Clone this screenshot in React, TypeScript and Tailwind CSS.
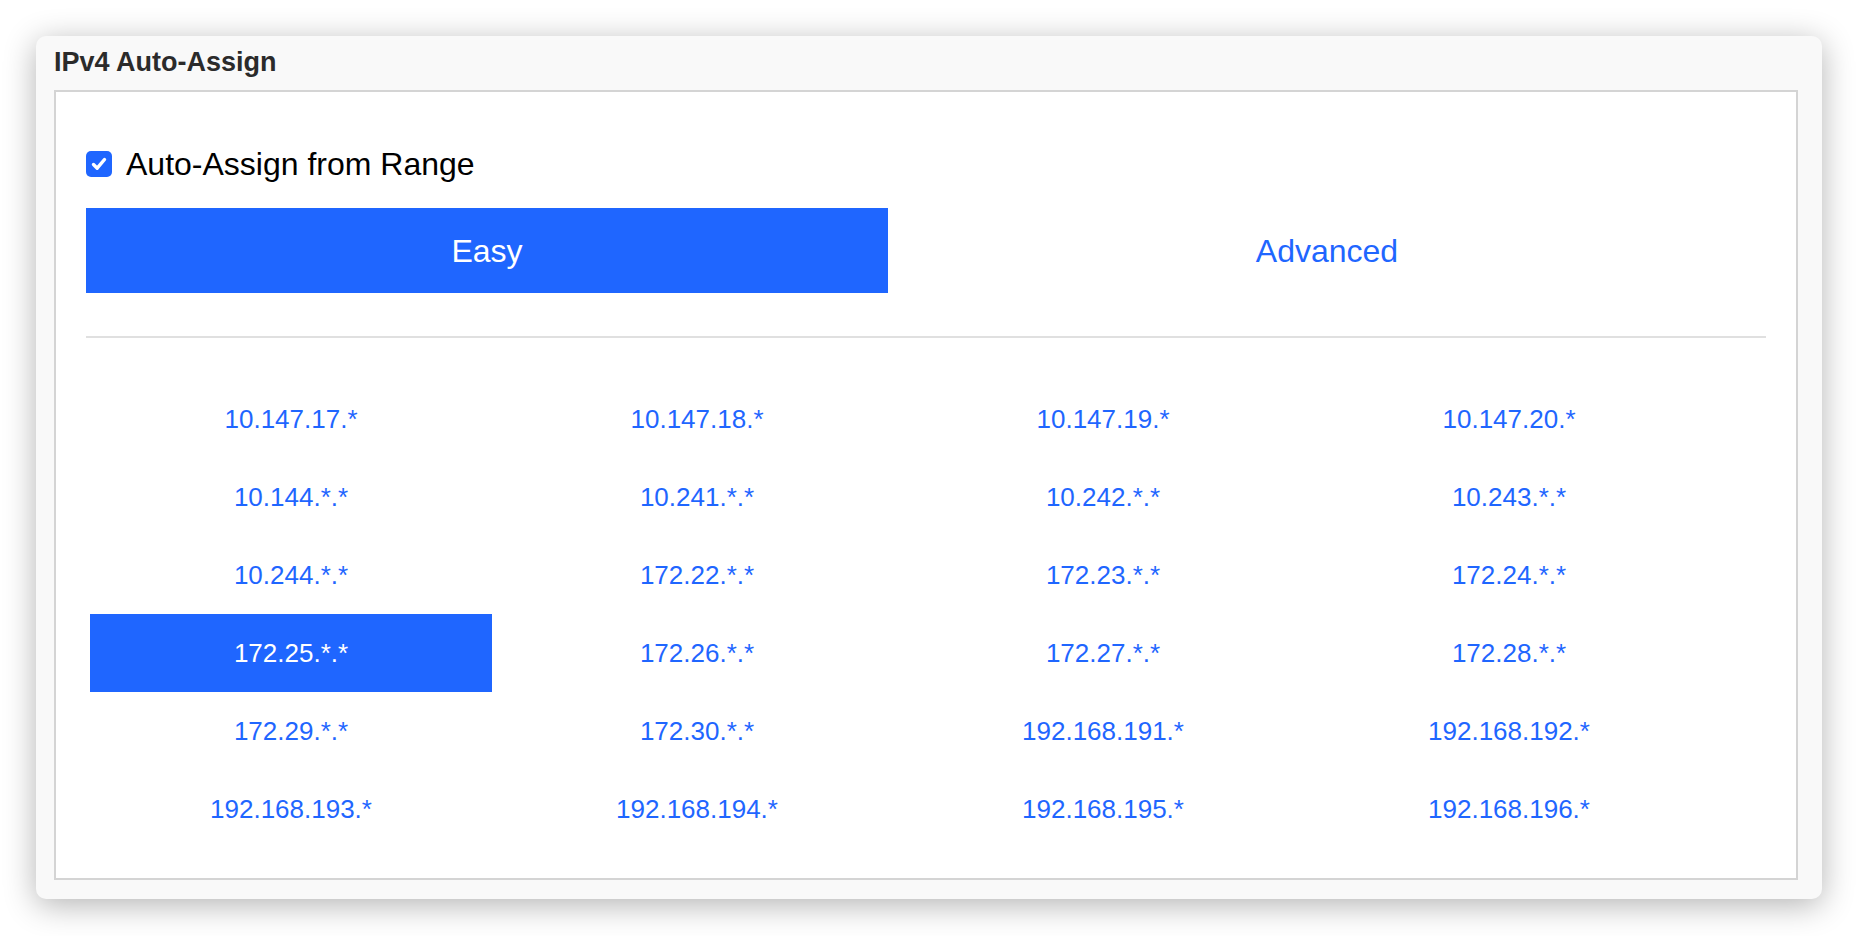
import React, { useState } from "react";

const ranges = [
  "10.147.17.*",
  "10.147.18.*",
  "10.147.19.*",
  "10.147.20.*",
  "10.144.*.*",
  "10.241.*.*",
  "10.242.*.*",
  "10.243.*.*",
  "10.244.*.*",
  "172.22.*.*",
  "172.23.*.*",
  "172.24.*.*",
  "172.25.*.*",
  "172.26.*.*",
  "172.27.*.*",
  "172.28.*.*",
  "172.29.*.*",
  "172.30.*.*",
  "192.168.191.*",
  "192.168.192.*",
  "192.168.193.*",
  "192.168.194.*",
  "192.168.195.*",
  "192.168.196.*",
];

function CheckBox({ checked, onClick }: { checked: boolean; onClick: () => void }) {
  return (
    <div
      onClick={onClick}
      className={`w-[26px] h-[26px] rounded-[5px] flex items-center justify-center cursor-pointer ${
        checked ? "bg-[#1f66ff]" : "bg-white border-2 border-gray-400"
      }`}
    >
      {checked && (
        <svg width="18" height="18" viewBox="0 0 18 18">
          <path
            d="M3.5 9.5 L7.2 13.2 L14.5 4.5"
            fill="none"
            stroke="white"
            strokeWidth="3.4"
            strokeLinecap="round"
            strokeLinejoin="round"
          />
        </svg>
      )}
    </div>
  );
}

export default function App() {
  const [autoAssign, setAutoAssign] = useState(true);
  const [mode, setMode] = useState<"easy" | "advanced">("easy");
  const [selected, setSelected] = useState("172.25.*.*");

  return (
    <div className="w-full h-[936px] bg-white p-[36px] font-['Liberation_Sans',Arial,sans-serif]">
      <div className="w-[1786px] h-[863px] bg-[#f9f9f9] rounded-[10px] shadow-[0_6px_32px_rgba(0,0,0,0.3)] pl-[18px] pr-[24px] flex flex-col">
        <div className="pt-[11px] pb-[13px] text-[27px] leading-[30px] font-bold text-[#2b2b2b]">
          IPv4 Auto-Assign
        </div>
        <div className="flex-1 mb-[19px] bg-white border-2 border-[#d4d4d4] px-[30px] pt-[54px]">
          <div className="flex items-center h-[36px]">
            <CheckBox checked={autoAssign} onClick={() => setAutoAssign(!autoAssign)} />
            <span className="ml-[14px] text-[32px] leading-[36px] text-black">
              Auto-Assign from Range
            </span>
          </div>

          <div className="flex mt-[26px] h-[85px]">
            <button
              onClick={() => setMode("easy")}
              className={`w-[802px] text-[32px] ${
                mode === "easy" ? "bg-[#1f66ff] text-white" : "bg-white text-[#1f66ff]"
              }`}
            >
              Easy
            </button>
            <button
              onClick={() => setMode("advanced")}
              className={`flex-1 text-[32px] ${
                mode === "advanced" ? "bg-[#1f66ff] text-white" : "bg-white text-[#1f66ff]"
              }`}
            >
              Advanced
            </button>
          </div>

          <div className="mt-[43px] h-[2px] bg-[#e0e0e0]" />

          <div className="mt-[42px] pl-[4px] grid grid-cols-[repeat(4,402px)] gap-x-[4px] auto-rows-[78px]">
            {ranges.map((r) => (
              <div
                key={r}
                onClick={() => setSelected(r)}
                className={`flex items-center justify-center text-[26px] cursor-pointer ${
                  selected === r ? "bg-[#1f66ff] text-white" : "text-[#1f66ff]"
                }`}
              >
                {r}
              </div>
            ))}
          </div>
        </div>
      </div>
    </div>
  );
}
